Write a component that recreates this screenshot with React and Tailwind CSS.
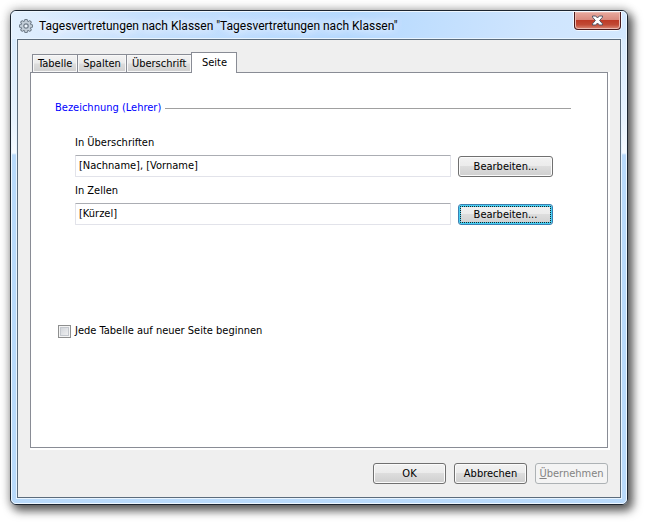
import React from "react";

function GearIcon() {
  return (
    <svg width="16" height="16" viewBox="0 0 16 16" aria-hidden="true" className="shrink-0">
      <g fill="#6f7c89">
        <rect x="6.2" y="1" width="3.6" height="14" rx="1" />
        <rect x="6.2" y="1" width="3.6" height="14" rx="1" transform="rotate(45 8 8)" />
        <rect x="6.2" y="1" width="3.6" height="14" rx="1" transform="rotate(90 8 8)" />
        <rect x="6.2" y="1" width="3.6" height="14" rx="1" transform="rotate(135 8 8)" />
        <circle cx="8" cy="8" r="5.7" />
      </g>
      <g fill="#c3ced8">
        <rect x="7.1" y="2" width="1.8" height="12" />
        <rect x="7.1" y="2" width="1.8" height="12" transform="rotate(45 8 8)" />
        <rect x="7.1" y="2" width="1.8" height="12" transform="rotate(90 8 8)" />
        <rect x="7.1" y="2" width="1.8" height="12" transform="rotate(135 8 8)" />
        <circle cx="8" cy="8" r="4.7" />
      </g>
      <circle cx="8" cy="8" r="2.2" fill="#eef5fc" stroke="#6f7c89" strokeWidth="1.2" />
    </svg>
  );
}

function TitleBar() {
  return (
    <header className="flex h-[27px] items-start justify-between pl-px">
      <div className="flex h-[27px] items-center gap-[5px]">
        <GearIcon />
        <h1 className="font-[Roboto,sans-serif] text-[12px] leading-[16px] whitespace-nowrap text-black [text-shadow:0_0_8px_#fff,0_0_12px_#fff]">
          Tagesvertretungen nach Klassen &quot;Tagesvertretungen nach Klassen&quot;
        </h1>
      </div>
      <button
        type="button"
        aria-label="Schließen"
        className="flex h-[18px] w-[47px] items-center justify-center rounded-b-[4px] border border-t-0 border-[#4a1a1c] bg-[linear-gradient(180deg,#e8aa9f_0%,#d98a7e_46%,#bd3a26_50%,#c14a35_75%,#dc8a78_100%)] shadow-[0_0_0_1px_#f4f9ff,inset_0_0_0_1px_#ecb9b0]"
      >
        <svg width="13" height="11" viewBox="0 0 13 11" aria-hidden="true">
          <path
            d="M1.5 1h3.2l1.8 2 1.8-2h3.2v1.2L8.6 5.5l2.9 3.3V10H8.3L6.5 8l-1.8 2H1.5V8.8l2.9-3.3L1.5 2.2z"
            fill="#fff"
            stroke="#535666"
            strokeWidth="1"
          />
        </svg>
      </button>
    </header>
  );
}

function Tab({ label, active }) {
  return (
    <button
      type="button"
      role="tab"
      aria-selected={active ? "true" : "false"}
      className={
        active
          ? "-mb-px -ml-px h-[21px] w-[46px] border border-b-0 border-[#898c95] bg-white pb-px"
          : "h-[18px] border border-b-0 border-[#898c95] bg-[linear-gradient(180deg,#f3f3f3_0%,#ebebeb_48%,#dddddd_52%,#cfcfcf_100%)] px-[5px] shadow-[inset_0_0_0_1px_#f8f8f8] not-first:-ml-px"
      }
    >
      {label}
    </button>
  );
}

function Button({ children, variant = "normal", className }) {
  const looks = {
    normal:
      "border-[#707070] bg-[linear-gradient(180deg,#f2f2f2_0%,#ebebeb_49%,#dddddd_50%,#cfcfcf_100%)] shadow-[inset_0_0_0_1px_#fbfbfb]",
    focused:
      "border-[#3c7fb1] bg-[linear-gradient(180deg,#f2f2f2_0%,#ebebeb_49%,#dddddd_50%,#cfcfcf_100%)] shadow-[inset_0_0_0_2px_#48d0f4] outline outline-dotted outline-[#222] -outline-offset-3",
    disabled: "border-[#adb2b5] bg-[#f4f4f4] text-[#838383]",
  };
  return (
    <button
      type="button"
      disabled={variant === "disabled"}
      className={`h-[21px] shrink-0 rounded-[3px] border text-center leading-[19px] ${looks[variant]} ${className}`}
    >
      {children}
    </button>
  );
}

function Field({ id, label, value, variant }) {
  return (
    <div>
      <label htmlFor={id} className="block h-[19px] leading-[14px]">
        {label}
      </label>
      <div className="flex items-center gap-[7px]">
        <input
          id={id}
          type="text"
          defaultValue={value}
          className="h-[22px] min-w-0 flex-1 rounded-[1px] border border-[#e2e3ea] border-t-[#abadb3] bg-white px-[3px] pb-[2px] leading-[18px] outline-none"
        />
        <Button variant={variant} className="w-[95px]">
          Bearbeiten...
        </Button>
      </div>
    </div>
  );
}

export default function App() {
  return (
    <main className="bg-white pt-[10px] pr-[19px] pb-[18px] pl-[10px] font-['DejaVu_Sans_Condensed','DejaVu_Sans',sans-serif] text-[11px] leading-[14px] text-black">
      <section className="rounded-[6px] border border-[#1c2530] bg-[linear-gradient(180deg,#d3e8fd_0px,#e8f3fe_110px,#f5faff_142px,#b9dafb_144px,#b9dafb_100%)] shadow-[4px_5px_10px_1px_rgba(0,0,0,0.6),0_0_10px_2px_rgba(0,0,0,0.2)]">
        <div className="rounded-[5px] border border-[#eef7ff] bg-[linear-gradient(100deg,#e3f0fe_0%,#c5e0fd_22%,#b5d9fe_55%,#cfe5fe_85%,#d3e8fe_100%)] bg-[length:100%_27px] bg-no-repeat px-[5px] pb-[5px]">
          <TitleBar />
          <div className="border border-[#5c6c7c] bg-[#efefef] px-3 pt-3 pb-[13px] shadow-[0_0_0_1px_#e8f4ff]">
            <div role="tablist" className="flex items-end pl-[2px]">
              <Tab label="Tabelle" />
              <Tab label="Spalten" />
              <Tab label="Überschrift" />
              <Tab label="Seite" active />
            </div>

            <div role="tabpanel" className="border border-[#898c95] bg-white pr-9 pb-[109px] pl-6 shadow-[1px_1px_0_1px_#fff]">
              <fieldset>
                <legend className="flex w-full items-center gap-1 pt-7 text-[#0000ff]">
                  <span>Bezeichnung (Lehrer)</span>
                  <span className="h-px flex-1 bg-[#a0a0a0]" />
                </legend>
                <div className="flex flex-col gap-[7px] pt-[21px] pr-[18px] pl-5">
                  <Field id="headings" label="In Überschriften" value="[Nachname], [Vorname]" variant="normal" />
                  <Field id="cells" label="In Zellen" value="[Kürzel]" variant="focused" />
                </div>
              </fieldset>

              <div className="flex items-center gap-1 pt-[99px] pl-[3px]">
                <input
                  id="new-page"
                  type="checkbox"
                  className="size-[13px] appearance-none border border-[#8e8f8f] bg-[linear-gradient(135deg,#cbcfd5,#f6f6f6)] shadow-[inset_0_0_0_1px_#f4f4f4,inset_0_0_0_2px_#c4c8ce]"
                />
                <label htmlFor="new-page">Jede Tabelle auf neuer Seite beginnen</label>
              </div>
            </div>

            <footer className="flex justify-end gap-2 pt-[15px]">
              <Button className="w-[73px]">OK</Button>
              <Button className="w-[73px]">Abbrechen</Button>
              <Button variant="disabled" className="w-[73px]">
                <span className="underline">Ü</span>bernehmen
              </Button>
            </footer>
          </div>
        </div>
      </section>
    </main>
  );
}
